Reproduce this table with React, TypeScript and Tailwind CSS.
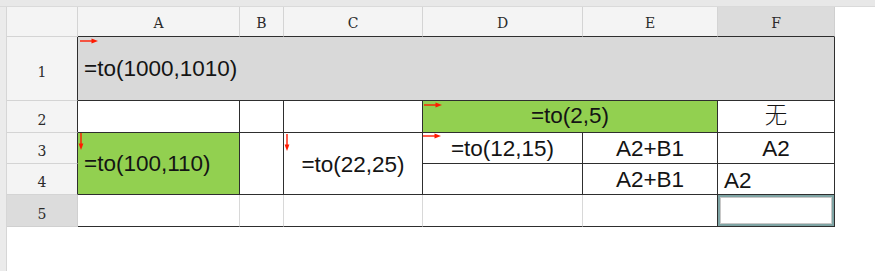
import React from "react";

const DARK = "border-[#2e2e2e]";
const LIGHT = "border-[#d4d4d4]";

function RightArrow({ className }: { className: string }) {
  return (
    <svg className={`absolute ${className}`} width="18" height="6" viewBox="0 0 18 6">
      <line x1="0" y1="3" x2="14" y2="3" stroke="#ff1a00" strokeWidth="1.4" />
      <polygon points="11.5,0.6 18,3 11.5,5.4" fill="#ff1a00" />
    </svg>
  );
}

function DownArrow({ className }: { className: string }) {
  return (
    <svg className={`absolute ${className}`} width="6" height="17" viewBox="0 0 6 17">
      <line x1="3" y1="0" x2="3" y2="13" stroke="#ff1a00" strokeWidth="1.4" />
      <polygon points="0.6,10.5 3,17 5.4,10.5" fill="#ff1a00" />
    </svg>
  );
}

const colHead =
  "flex items-center justify-center pt-[3px] border-r border-b text-[14px] text-[#2a2a2a] [font-family:'DejaVu_Serif',serif]";
const rowHead =
  "flex items-center justify-center pt-[7px] border-r border-b text-[14px] text-[#2a2a2a] [font-family:'DejaVu_Serif',serif]";
const cellText =
  "text-[22.5px] leading-none text-[#141414] [font-family:'Liberation_Sans','Noto_Sans_CJK_SC',sans-serif]";

export default function App() {
  return (
    <div className="w-[875px] h-[271px] bg-white overflow-hidden">
      <div className="h-[7px] bg-[#e8e8e8] border-b border-[#dadada]" />
      <div className="flex h-[264px]">
        <div className="w-[7px] bg-[#ebebeb] border-r border-[#d6d6d6]" />
        <div className="grid grid-cols-[71px_162px_44px_139px_160px_135px_117px] grid-rows-[30px_64px_32px_31px_31px_32px] self-start">
          {/* column headers */}
          <div className={`bg-[#f4f4f4] border-r border-b ${LIGHT}`} />
          <div className={`${colHead} bg-[#f4f4f4] border-r-[#d4d4d4] border-b-[#2e2e2e]`}>A</div>
          <div className={`${colHead} bg-[#f4f4f4] border-r-[#d4d4d4] border-b-[#2e2e2e]`}>B</div>
          <div className={`${colHead} bg-[#f4f4f4] border-r-[#d4d4d4] border-b-[#2e2e2e]`}>C</div>
          <div className={`${colHead} bg-[#f4f4f4] border-r-[#d4d4d4] border-b-[#2e2e2e]`}>D</div>
          <div className={`${colHead} bg-[#f4f4f4] border-r-[#d4d4d4] border-b-[#2e2e2e]`}>E</div>
          <div className={`${colHead} bg-[#dcdcdc] border-r-[#cfcfcf] border-b-[#2e2e2e]`}>F</div>

          {/* row 1 */}
          <div className={`${rowHead} bg-[#f4f4f4] border-r-[#2e2e2e] border-b-[#d4d4d4]`}>1</div>
          <div className={`col-span-6 relative flex items-center pl-[6px] pt-[2px] bg-[#d9d9d9] border-r border-b ${DARK}`}>
            <RightArrow className="top-[1px] left-[2px]" />
            <span className={cellText}>=to(1000,1010)</span>
          </div>

          {/* row 2 */}
          <div className={`${rowHead} bg-[#f4f4f4] border-r-[#2e2e2e] border-b-[#d4d4d4]`}>2</div>
          <div className={`border-r border-b ${DARK}`} />
          <div className={`border-r border-b ${DARK}`} />
          <div className={`border-r border-b ${DARK}`} />
          <div className={`col-span-2 relative flex items-center justify-center bg-[#92d050] border-r border-b ${DARK}`}>
            <RightArrow className="top-[1px] left-[1px]" />
            <span className={cellText}>=to(2,5)</span>
          </div>
          <div className={`flex items-center justify-center border-r border-b ${DARK}`}>
            <span className={`${cellText} font-light text-[#222]`}>无</span>
          </div>

          {/* rows 3 and 4 */}
          <div className={`${rowHead} bg-[#f4f4f4] border-r-[#2e2e2e] border-b-[#d4d4d4]`}>3</div>
          <div className={`row-span-2 relative flex items-center pl-[6px] pt-[2px] bg-[#92d050] border-r border-b ${DARK}`}>
            <DownArrow className="top-0 left-0" />
            <span className={cellText}>=to(100,110)</span>
          </div>
          <div className={`row-span-2 border-r border-b ${DARK}`} />
          <div className={`row-span-2 relative flex items-center justify-center pt-[3px] border-r border-b ${DARK}`}>
            <DownArrow className="top-[1px] left-0" />
            <span className={cellText}>=to(22,25)</span>
          </div>
          <div className={`relative flex items-center justify-center pt-[2px] border-r border-b ${DARK}`}>
            <RightArrow className="top-0 left-0" />
            <span className={cellText}>=to(12,15)</span>
          </div>
          <div className={`flex items-center justify-center pt-[2px] border-r border-b ${DARK}`}>
            <span className={cellText}>A2+B1</span>
          </div>
          <div className={`flex items-center justify-center pt-[2px] border-r border-b ${DARK}`}>
            <span className={cellText}>A2</span>
          </div>

          <div className={`${rowHead} bg-[#f4f4f4] border-r-[#2e2e2e] border-b-[#d4d4d4]`}>4</div>
          <div className={`border-r border-b ${DARK}`} />
          <div className={`flex items-center justify-center pt-[2px] border-r border-b ${DARK}`}>
            <span className={cellText}>A2+B1</span>
          </div>
          <div className={`flex items-center pl-[6px] pt-[5px] border-r border-b ${DARK}`}>
            <span className={cellText}>A2</span>
          </div>

          {/* row 5 */}
          <div className={`${rowHead} bg-[#dcdcdc] border-r-[#d0d0d0] border-b-[#d0d0d0]`}>5</div>
          <div className="border-r border-b border-r-[#d8d8d8] border-b-[#2e2e2e]" />
          <div className="border-r border-b border-r-[#d8d8d8] border-b-[#2e2e2e]" />
          <div className="border-r border-b border-r-[#d8d8d8] border-b-[#2e2e2e]" />
          <div className="border-r border-b border-r-[#d8d8d8] border-b-[#2e2e2e]" />
          <div className="border-r border-b border-r-[#2e2e2e] border-b-[#2e2e2e]" />
          <div className={`border-r border-b ${DARK} p-0`}>
            <div className="h-full border-2 border-[#7fa4a4]">
              <div className="h-full border border-[#c8c8c8] bg-white" />
            </div>
          </div>
        </div>
      </div>
    </div>
  );
}
